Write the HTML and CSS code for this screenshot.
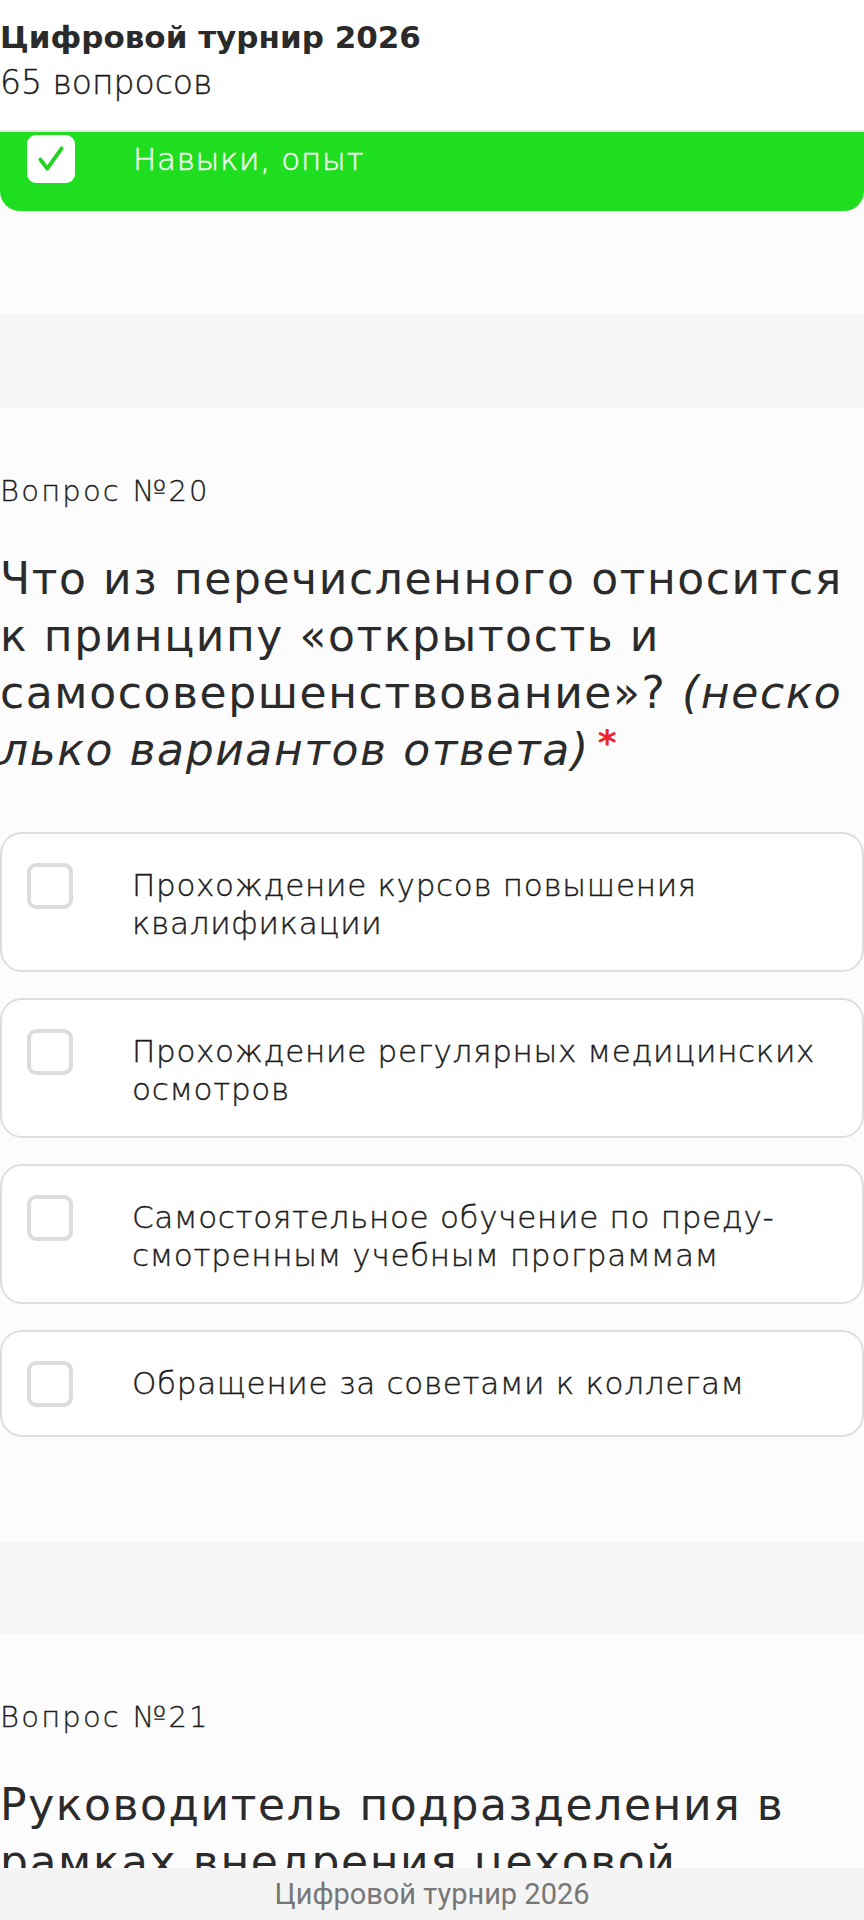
FILE: index.html
```html
<html lang="ru">
  <head>
    <title>Цифровой турнир 2026</title>
    <meta name="viewport" content="width=device-width, initial-scale=1.0" />
    <link rel="stylesheet" href="styles.css">
  </head>
  <body>
    <header class="cabecera">
      <h1 class="titulo">Цифровой турнир 2026</h1>
      <div class="conteo">65 вопросов</div>
    </header>

    <div class="opcion opcion-marcada opcion-cortada">
      <span class="caja caja-on">
        <svg width="32" height="32" viewBox="0 0 30 30">
          <path d="M5 15.5 L11.5 24 L25 5" fill="none" stroke="#22d422" stroke-width="3.6" stroke-linecap="round" stroke-linejoin="round"/>
        </svg>
      </span>
      <span class="opcion-texto">Навыки, опыт</span>
    </div>

    <div class="hueco"></div>
    <div class="franja"></div>

    <section class="pregunta">
      <div class="numero">Вопрос №20</div>
      <h2 class="enunciado">Что из перечисленного относится к принципу «открытость и самосовершенствование»? <em class="pista">(несколько вариантов ответа)</em><span class="obligatorio">*</span></h2>

      <div class="opciones">
        <div class="opcion">
          <span class="caja"></span>
          <span class="opcion-texto">Прохождение курсов повышения квалификации</span>
        </div>
        <div class="opcion">
          <span class="caja"></span>
          <span class="opcion-texto">Прохождение регулярных медицинских осмотров</span>
        </div>
        <div class="opcion">
          <span class="caja"></span>
          <span class="opcion-texto">Самостоятельное обучение по преду&shy;смотренным учебным программам</span>
        </div>
        <div class="opcion">
          <span class="caja"></span>
          <span class="opcion-texto">Обращение за советами к коллегам</span>
        </div>
      </div>
    </section>

    <div class="hueco"></div>
    <div class="franja"></div>

    <section class="pregunta">
      <div class="numero">Вопрос №21</div>
      <h2 class="enunciado">Руководитель подразделения в рамках внедрения цеховой системы управления должен</h2>
    </section>

    <footer class="pie">Цифровой турнир 2026</footer>
  </body>
</html>
```

FILE: styles.css
```css
body {
  margin: 0;
  background-color: #fcfcfc;
  font-family: "DejaVu Sans", "Noto Sans", sans-serif;
  color: #2b2b2b;
}

.cabecera {
  background-color: #fff;
  height: 132px;
  box-sizing: border-box;
  padding-top: 17px;
  border-bottom: 2px solid #e4e4e4;
}
.titulo {
  margin: 0;
  font-size: 31px;
  line-height: 40px;
  font-weight: bold;
  color: #2a2a2a;
}
.conteo {
  margin-top: 6px;
  font-size: 33px;
  line-height: 40px;
  font-weight: 300;
  color: #1c1c1c;
  -webkit-text-stroke: 0.35px #1c1c1c;
}

.hueco {
  height: 104px;
}
.franja {
  height: 93px;
  background-color: #f6f6f6;
}

.pregunta {
  padding-top: 66px;
}
.numero {
  font-size: 29px;
  line-height: 34px;
  font-weight: 300;
  letter-spacing: 2.2px;
  color: #1c1c1c;
  -webkit-text-stroke: 0.3px #1c1c1c;
}
.enunciado {
  margin: 42px 0 0 0;
  font-size: 44px;
  line-height: 57px;
  letter-spacing: 1.6px;
  font-weight: normal;
  color: #2b2b2b;
}
.pista {
  word-break: break-all;
}
.obligatorio {
  color: #e8262a;
  font-size: 36px;
  font-weight: bold;
  line-height: 0;
  vertical-align: 10px;
  margin-left: 8px;
}

.opciones {
  margin-top: 54px;
  display: flex;
  flex-direction: column;
  gap: 26px;
}
.opcion {
  display: flex;
  align-items: flex-start;
  background-color: #fff;
  border: 2px solid #dedede;
  border-radius: 22px;
  padding: 32px 20px 28px 25px;
}
.caja {
  flex: none;
  width: 46px;
  height: 46px;
  margin-top: -3px;
  box-sizing: border-box;
  border: 4px solid #dcdcdc;
  border-radius: 9px;
  background-color: #fff;
  display: flex;
  align-items: center;
  justify-content: center;
}
.opcion-texto {
  margin-left: 59px;
  font-size: 31px;
  line-height: 38px;
  letter-spacing: 0.7px;
  font-weight: 300;
  color: #1c1c1c;
  -webkit-text-stroke: 0.4px #1c1c1c;
  hyphens: manual;
}

.opcion-marcada {
  background-color: #1fdd1f;
  border: none;
}
.opcion-cortada {
  border-radius: 0 0 20px 20px;
  padding: 3px 20px 28px 27px;
}
.caja-on {
  width: 48px;
  height: 48px;
  margin-top: 0;
  border: none;
}
.opcion-marcada .opcion-texto {
  color: #f2fdf1;
  -webkit-text-stroke: 0.5px #f2fdf1;
  margin-top: 5px;
  margin-left: 58px;
}

.pie {
  position: fixed;
  left: 0;
  right: 0;
  bottom: 0;
  height: 52px;
  line-height: 52px;
  background-color: #f4f4f4;
  color: #777;
  text-align: center;
  font-family: Roboto, "Noto Sans", sans-serif;
  font-size: 29px;
}
```
